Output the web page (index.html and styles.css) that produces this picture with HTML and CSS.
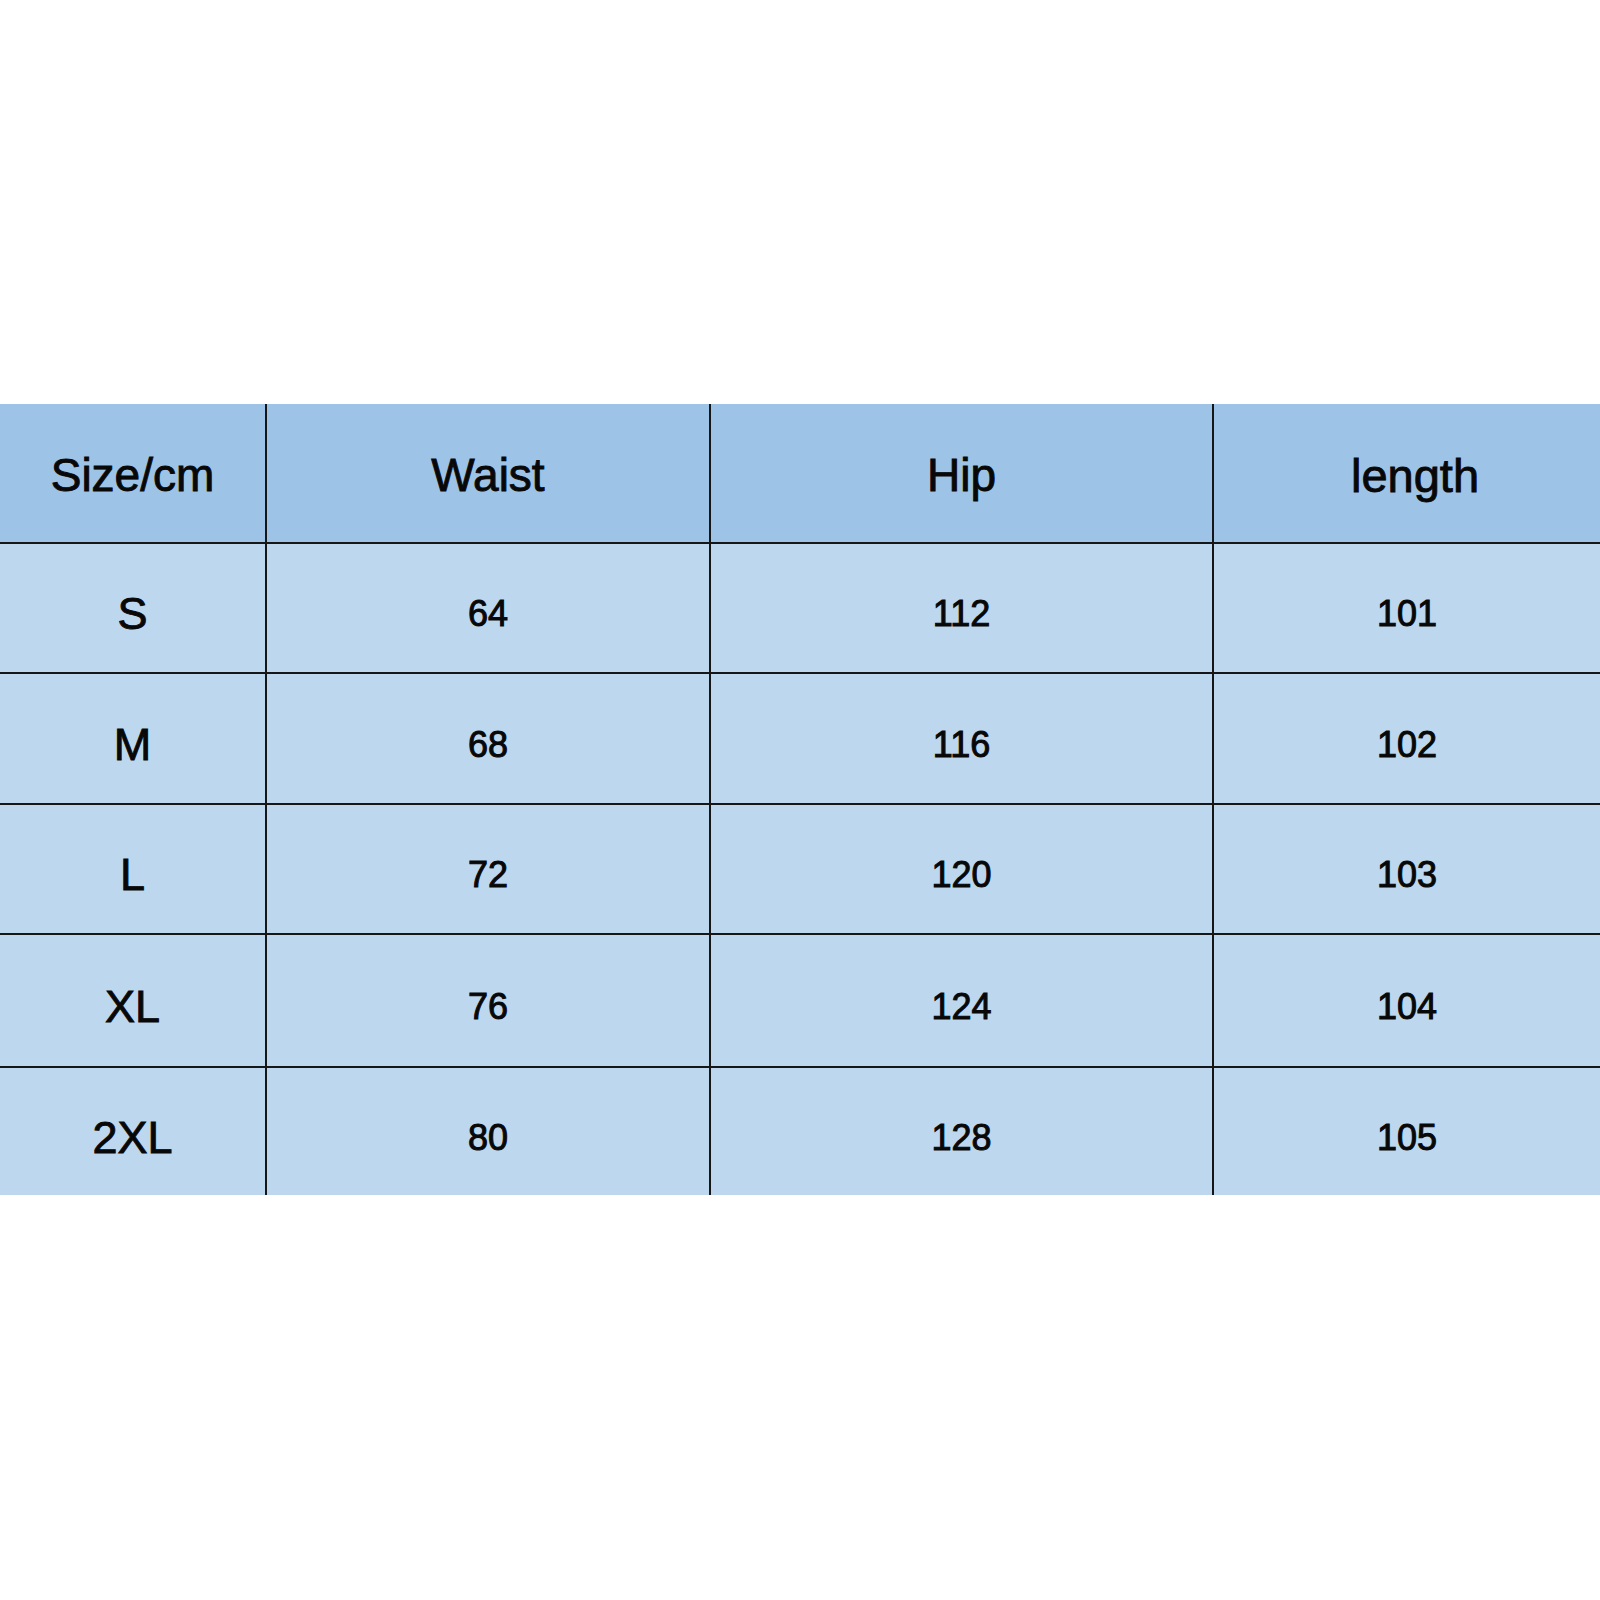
FILE: index.html
```html
<!DOCTYPE html>
<html lang="en">
<head>
<meta charset="utf-8">
<title>Size chart</title>
<link rel="stylesheet" href="styles.css">
</head>
<body>
<div class="page">
  <div class="chart">
    <div class="cell head">Size/cm</div>
    <div class="cell head">Waist</div>
    <div class="cell head">Hip</div>
    <div class="cell head last">length</div>

    <div class="cell size">S</div>
    <div class="cell num">64</div>
    <div class="cell num">112</div>
    <div class="cell num">101</div>

    <div class="cell size">M</div>
    <div class="cell num">68</div>
    <div class="cell num">116</div>
    <div class="cell num">102</div>

    <div class="cell size">L</div>
    <div class="cell num">72</div>
    <div class="cell num">120</div>
    <div class="cell num">103</div>

    <div class="cell size">XL</div>
    <div class="cell num">76</div>
    <div class="cell num">124</div>
    <div class="cell num">104</div>

    <div class="cell size">2XL</div>
    <div class="cell num">80</div>
    <div class="cell num">128</div>
    <div class="cell num">105</div>
  </div>
</div>
</body>
</html>
```

FILE: styles.css
```css
html, body {
  margin: 0;
  padding: 0;
  background: #ffffff;
}

.page {
  width: 1600px;
  height: 1600px;
  padding-top: 404px;
  box-sizing: border-box;
}

.chart {
  display: grid;
  grid-template-columns: 265px 442px 501px 1fr;
  grid-template-rows: 138px 128px 129px 128px 131px 127px;
  gap: 2px;
  background: #161616;
  font-family: "Liberation Sans", Arial, sans-serif;
  color: #080808;
}

.cell {
  display: flex;
  align-items: center;
  justify-content: center;
  background: #bdd7ee;
}

.head {
  background: #9dc3e6;
  font-size: 46px;
  padding-top: 4px;
  -webkit-text-stroke: 0.9px #080808;
}

.head.last {
  font-size: 47px;
  padding-left: 16px;
}

.size {
  font-size: 45px;
  padding-top: 12px;
  -webkit-text-stroke: 0.9px #080808;
}

.num {
  font-size: 36px;
  padding-top: 12px;
  -webkit-text-stroke: 1px #080808;
}
```
